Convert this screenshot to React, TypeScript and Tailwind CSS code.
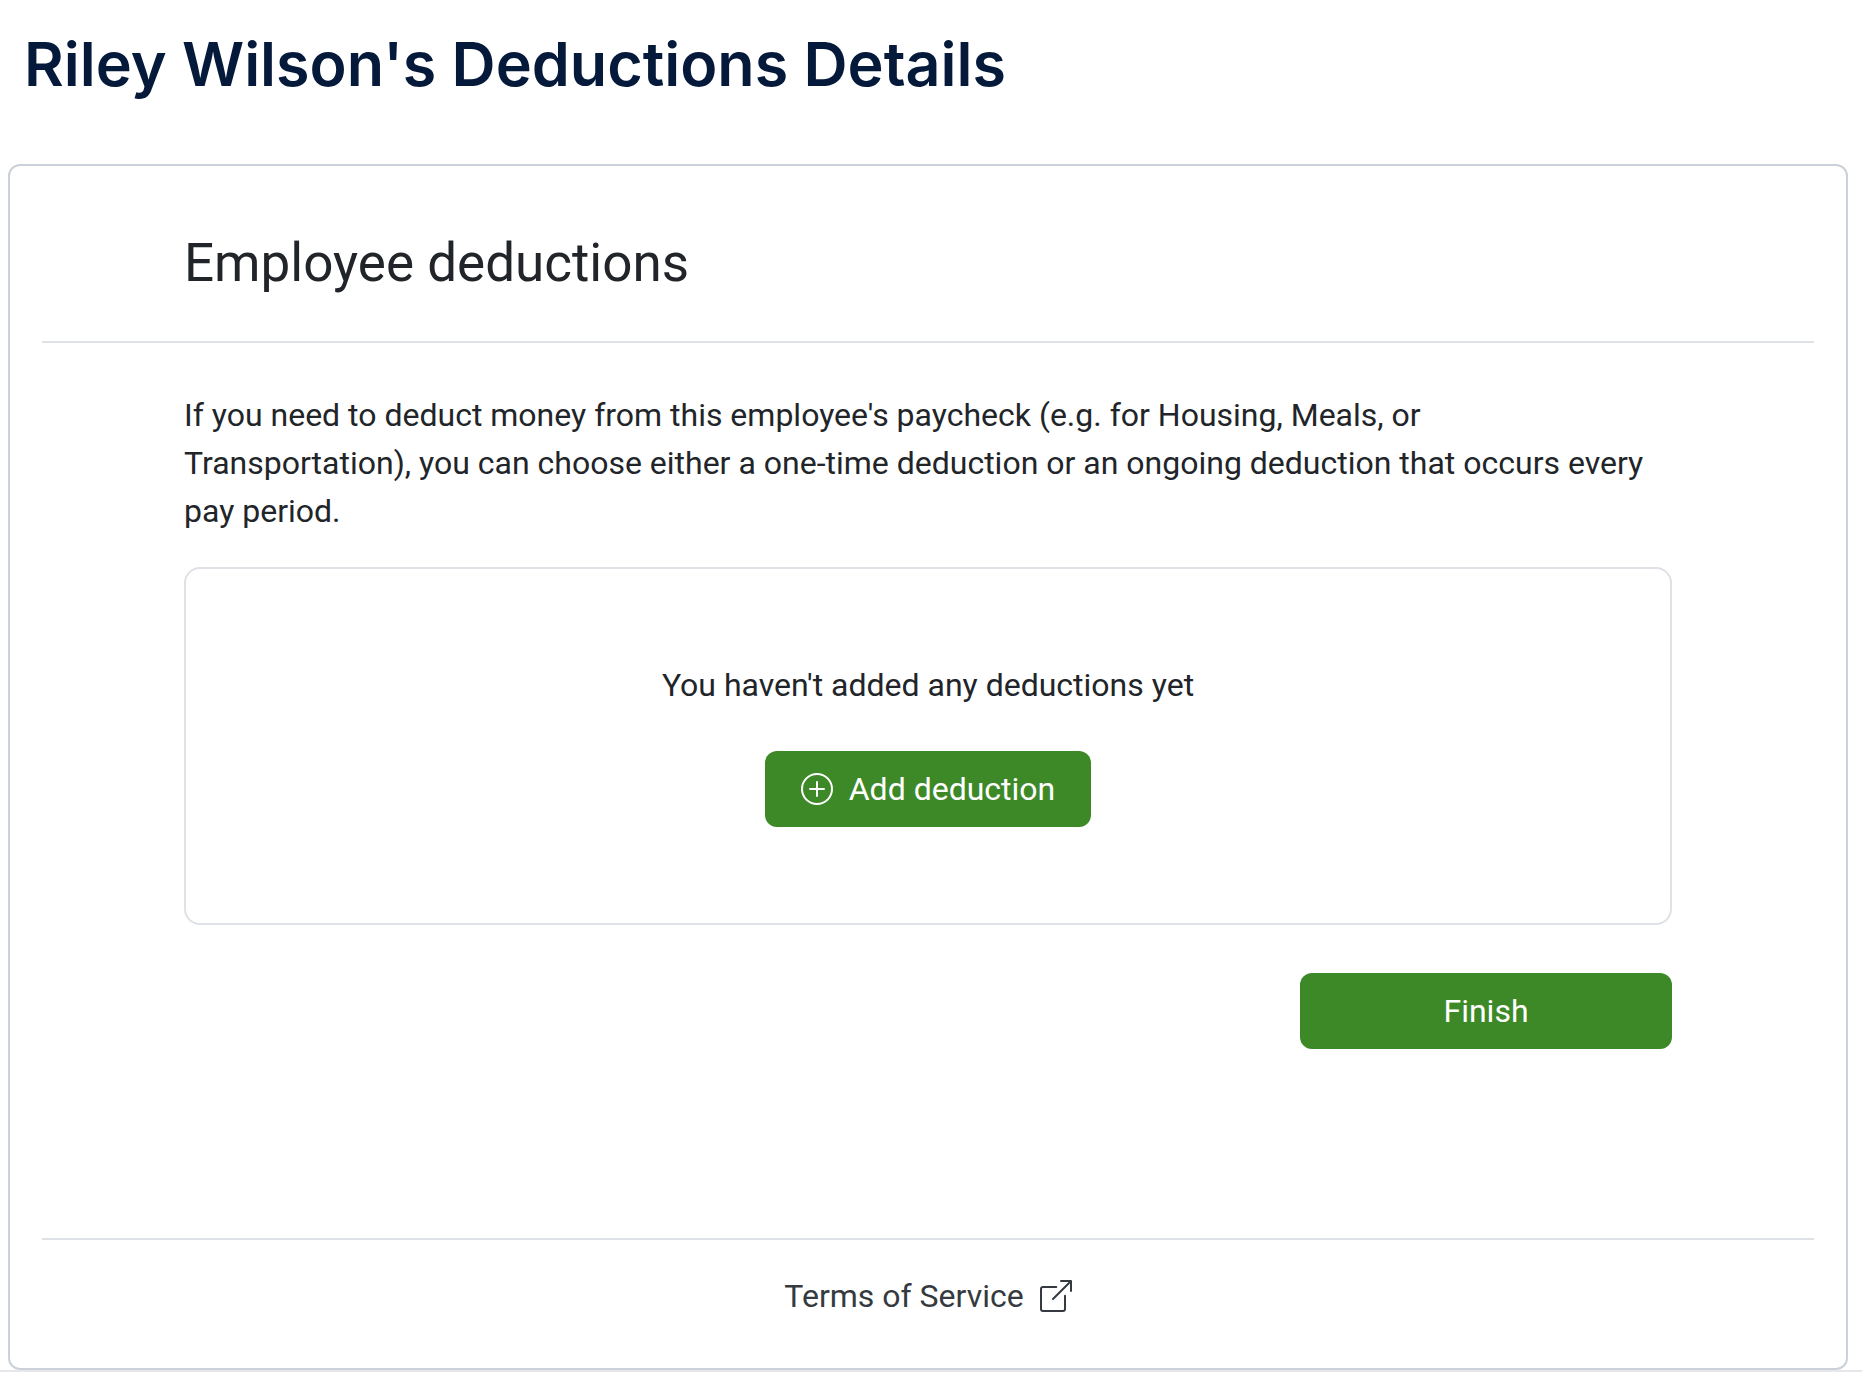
import React from 'react';
import { BsBoxArrowUpRight, BsPlusCircle } from 'react-icons/bs';

interface PrimaryButtonProps {
  className?: string;
  children: React.ReactNode;
}

const PrimaryButton: React.FC<PrimaryButtonProps> = ({ className = '', children }) => (
  <button
    type="button"
    className={`flex items-center justify-center gap-4 rounded-xl bg-[#3d8928] px-9 py-3.5 leading-12 text-white hover:bg-[#347522] ${className}`}
  >
    {children}
  </button>
);

const EmptyDeductions: React.FC = () => (
  <div className="mt-8 flex flex-col items-center gap-[42px] rounded-2xl border-2 border-[#dee2e6] pt-23 pb-24">
    <p>You haven't added any deductions yet</p>
    <PrimaryButton>
      <BsPlusCircle className="size-8" aria-hidden="true" />
      Add deduction
    </PrimaryButton>
  </div>
);

export default function App() {
  return (
    <div className="bg-white font-[Roboto,'Noto_Sans',sans-serif] text-[32px] leading-12 text-[#212529]">
      <h1 className="px-6 pt-6 pb-15 font-[Inter,sans-serif] text-[61px] leading-20 font-semibold text-[#05193b]">
        Riley Wilson's Deductions Details
      </h1>

      <main className="mr-3.5 ml-2 rounded-xl border-2 border-[#cbd1d8] px-8">
        <header className="border-b-2 border-[#dee2e6] px-[142px] pt-[65px] pb-[46px]">
          <h2 className="text-[53px] leading-16">Employee deductions</h2>
        </header>

        <section className="px-[142px] pt-12 pb-[189px]">
          <p>
            If you need to deduct money from this employee's paycheck (e.g. for Housing, Meals, or
            <br />
            Transportation), you can choose either a one-time deduction or an ongoing deduction that
            occurs every
            <br />
            pay period.
          </p>
          <EmptyDeductions />
          <div className="mt-12 flex justify-end">
            <PrimaryButton className="w-1/4">Finish</PrimaryButton>
          </div>
        </section>

        <footer className="flex justify-center border-t-2 border-[#dee2e6] pt-8 pb-12">
          <a href="#terms" className="flex items-center gap-4 text-[#343a40]">
            Terms of Service
            <BsBoxArrowUpRight className="size-8" aria-hidden="true" />
          </a>
        </footer>
      </main>
      <hr className="border-t-2 border-[#e5e7eb]" />
    </div>
  );
}
